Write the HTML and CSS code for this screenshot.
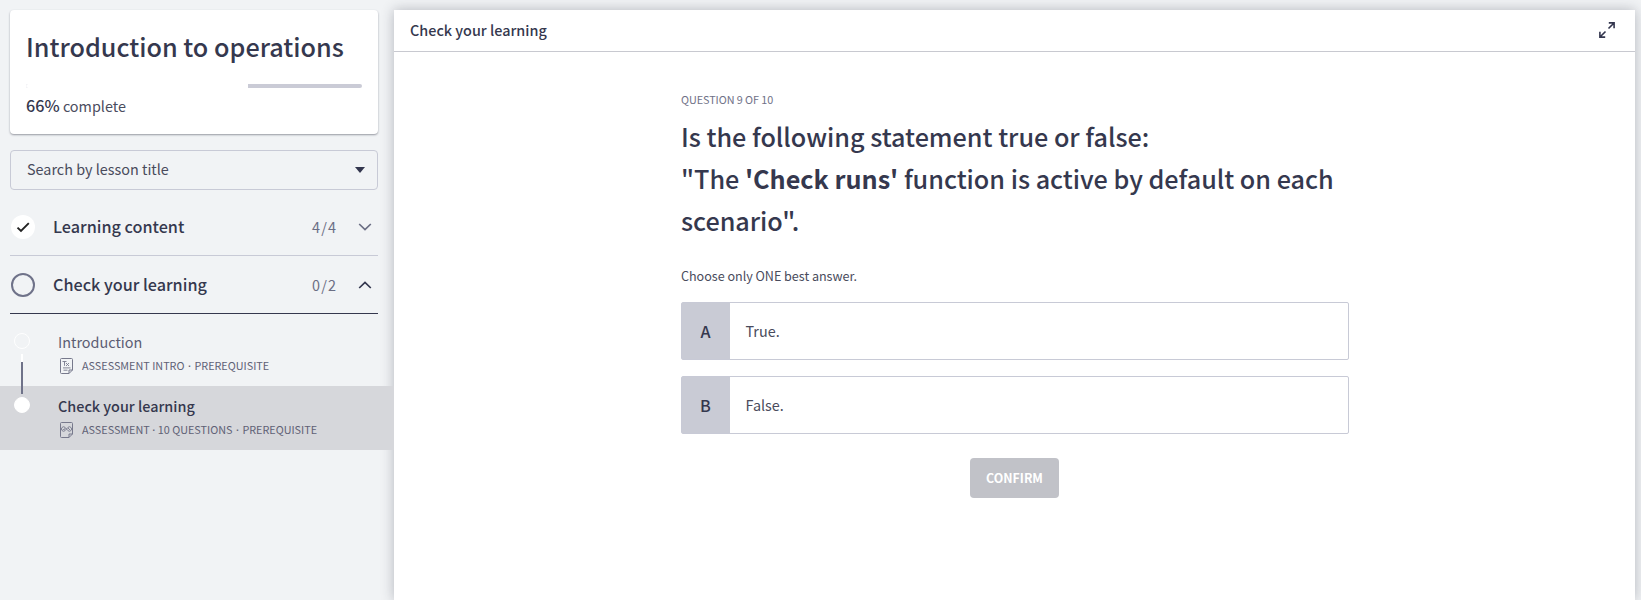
FILE: index.html
```html
<!DOCTYPE html>
<html lang="en">
<head>
<meta charset="utf-8">
<title>Introduction to operations</title>
<link rel="stylesheet" href="styles.css">
</head>
<body>
<div class="app">
  <aside class="sidebar">
    <section class="card">
      <h1 class="card-title">Introduction to operations</h1>
      <div class="progress"><div class="progress-fill" style="width:66%"></div></div>
      <p class="complete"><b>66%</b> complete</p>
    </section>
    <div class="select"><span class="select-text">Search by lesson title</span>
      <svg width="10" height="6" viewBox="0 0 10 6"><path d="M0 0H10L5 6Z" fill="#33364e"/></svg>
    </div>
    <div class="group">
      <svg class="state" width="24" height="24" viewBox="0 0 24 24"><circle cx="12" cy="12" r="12" fill="#fff"/><path d="M6.500 12.600 10 16 17.800 8.200" fill="none" stroke="#222" stroke-width="1.900"/></svg>
      <h2 class="group-title">Learning content</h2>
      <span class="count">4/4</span>
      <svg width="14" height="8" viewBox="0 0 14 8"><path d="M1.200 1 7 6.600 12.800 1" fill="none" stroke="#6b6e84" stroke-width="1.700"/></svg>
    </div>
    <div class="group open">
      <svg class="state" width="24" height="24" viewBox="0 0 24 24"><circle cx="12" cy="12" r="11" fill="none" stroke="#6f7289" stroke-width="2"/></svg>
      <h2 class="group-title">Check your learning</h2>
      <span class="count">0/2</span>
      <svg width="14" height="8" viewBox="0 0 14 8"><path d="M1.200 7 7 1.400 12.800 7" fill="none" stroke="#33364e" stroke-width="1.700"/></svg>
    </div>
    <ul class="lessons">
      <li class="lesson">
        <span class="dot"></span>
        <div class="lesson-body">
          <div class="lesson-title">Introduction</div>
          <div class="meta">
            <svg width="13" height="16" viewBox="0 0 13 16" fill="none" stroke="#77798c"><path d="M1.500.5h10a1 1 0 0 1 1 1V12L9 15.500H1.500a1 1 0 0 1-1-1v-13a1 1 0 0 1 1-1ZM12.500 12H9v3.500"/><path d="M2.500 3.500h4M4.500 3.500v4.300M6 5l3 3M9 5 6 8M3 9.900h7.500M3.500 12.200h4" stroke-width=".9"/></svg>
            <span>ASSESSMENT INTRO</span><span class="sep">·</span><span>PREREQUISITE</span>
          </div>
        </div>
      </li>
      <li class="lesson active">
        <span class="rail"></span>
        <span class="dot"></span>
        <div class="lesson-body">
          <div class="lesson-title">Check your learning</div>
          <div class="meta">
            <svg width="13" height="16" viewBox="0 0 13 16" fill="none" stroke="#77798c"><path d="M1.500.5h10a1 1 0 0 1 1 1V12L9 15.500H1.500a1 1 0 0 1-1-1v-13a1 1 0 0 1 1-1ZM12.500 12H9v3.500"/><path d="M6.500 7 5 5.300a2.200 2.200 0 1 0 0 3.400L8 5.300a2.200 2.200 0 1 1 0 3.400ZM2.800 7l1 1 1.500-2M8 6l2 2" stroke-width=".9"/></svg>
            <span>ASSESSMENT</span><span class="sep tight">·</span><span>10 QUESTIONS</span><span class="sep">·</span><span>PREREQUISITE</span>
          </div>
        </div>
      </li>
    </ul>
  </aside>
  <main class="panel">
    <header class="panel-head">
      <h2 class="panel-title">Check your learning</h2>
      <svg class="expand" width="16" height="16" viewBox="0 0 16 16" fill="none" stroke="#33364e" stroke-width="1.600"><path d="M9.500 6.500 15 1M9.800.9H15.100V6.200M6.500 9.500 1 15M.9 9.800V15.100H6.200"/></svg>
    </header>
    <div class="quiz">
      <p class="step">QUESTION 9 OF 10</p>
      <h1 class="question">Is the following statement true or false:<br>"The <b>'Check runs'</b> function is active by default on each<br>scenario".</h1>
      <p class="hint">Choose only ONE best answer.</p>
      <div class="option"><span class="letter">A</span><span class="answer">True.</span></div>
      <div class="option"><span class="letter">B</span><span class="answer">False.</span></div>
      <button class="confirm">CONFIRM</button>
    </div>
  </main>
</div>
</body>
</html>
```
FILE: styles.css
```css
* { box-sizing: border-box; }
body {
  margin: 0;
  background: #f1f3f5;
  color: #35384e;
  font-family: "Noto Sans CJK SC", "Open Sans", sans-serif;
  overflow: hidden;
}
h1, h2, p, ul { margin: 0; padding: 0; }
h1, h2 { font-weight: 500; }
svg { display: block; flex: none; }
.app { display: flex; height: 600px; padding-top: 10px; }
.sidebar { width: 394px; flex: none; }
.card {
  margin: 0 16px 16px 10px;
  height: 124px;
  padding: 18px 16px 0;
  border-radius: 4px;
  background: #fff;
  box-shadow: 0 1px 2px rgba(40, 42, 60, .45);
}
.card-title { font-size: 25.2px; line-height: 36px; white-space: nowrap; }
.progress { height: 4px; margin-top: 20px; border-radius: 2px; background: #cacbd6; overflow: hidden; }
.progress-fill { height: 4px; background: #fff; }
.complete { margin-top: 5px; font-size: 14.4px; line-height: 24px; color: #4a4c5e; }
.complete b { font-weight: 500; font-size: 16.2px; color: #35384e; }
.select {
  display: flex;
  align-items: center;
  justify-content: space-between;
  margin: 0 16px 9px 10px;
  height: 40px;
  padding: 0 12px 0 16px;
  border: 1px solid #c8cad6;
  border-radius: 4px;
}
.select-text { font-size: 14.4px; line-height: 20px; padding-bottom: 2px; color: #494b5c; }
.group {
  display: flex;
  align-items: center;
  height: 57px;
  margin: 0 16px 0 10px;
  padding: 0 6px 0 1px;
  border-bottom: 1px solid #c8cad6;
}
.group.open { height: 58px; border-color: #35384e; }
.group-title { flex: 1; margin-left: 18px; font-size: 16.2px; line-height: 24px; padding-bottom: 2px; }
.open .group-title { padding-bottom: 1px; }
.count { margin-right: 21px; font-size: 14.4px; line-height: 20px; letter-spacing: 1.1px; color: #6b6e84; }
.lessons { list-style: none; margin-top: 8px; }
.lesson { position: relative; display: flex; height: 64px; padding: 11px 0 0 14px; }
.lesson.active { background: #d6d7db; }
.dot { width: 16px; height: 16px; flex: none; border: 1px solid #fff; border-radius: 50%; }
.active .dot { background: #fff; }
.rail {
  position: absolute;
  left: 21px;
  top: -32px;
  width: 2px;
  height: 40px;
  background: linear-gradient(#fff 8px, #6f7289 8px);
}
.lesson-body { margin: -1px 0 0 28px; }
.lesson-title { font-size: 14.4px; line-height: 20px; color: #5b5d73; }
.active .lesson-title { font-weight: 500; color: #35384e; }
.meta { display: flex; align-items: center; height: 16px; margin: 5px 0 0 1px; font-size: 10.8px; line-height: 16px; color: #5f6175; white-space: nowrap; }
.meta svg { margin: 2px 9px 0 1px; }
.sep { width: 10px; padding-top: 1px; text-align: center; font-family: "Open Sans", sans-serif; font-weight: 600; }
.sep.tight { width: 8px; }
.panel {
  width: 1241px;
  flex: none;
  background: #fff;
  box-shadow: 0 0 12px rgba(40, 42, 60, .3);
}
.panel-head {
  display: flex;
  align-items: center;
  justify-content: space-between;
  height: 42px;
  padding: 0 20px 0 16px;
  border-bottom: 1px solid #c8c9d0;
}
.panel-title { font-size: 14.4px; line-height: 20px; padding-bottom: 2px; }
.expand { margin-bottom: 2px; }
.quiz { display: flex; flex-direction: column; width: 668px; margin-left: 287px; padding-top: 39px; }
.step { font-size: 10.8px; line-height: 16px; color: #6f7187; letter-spacing: -.05px; }
.question { margin-top: 8px; font-size: 25.2px; line-height: 42px; letter-spacing: -.015px; white-space: nowrap; }
.hint { margin: 25px 0 16px; font-size: 12.6px; line-height: 20px; color: #494b5c; letter-spacing: -.03px; }
.option {
  display: flex;
  height: 58px;
  margin-bottom: 16px;
  border: 1px solid #c8cad6;
  border-radius: 2px;
  line-height: 56px;
}
.letter { width: 48px; padding-right: 1px; background: #c9cbd5; text-align: center; font-size: 16.2px; font-weight: 500; }
.answer { margin-left: 15.5px; font-size: 14.4px; color: #494b5c; }
.confirm {
  align-self: center;
  width: 89px;
  height: 40px;
  margin: 8px 1px 0 0;
  padding: 0;
  border: 0;
  border-radius: 4px;
  background: #c1c2c8;
  color: #fff;
  font: 700 12.4px/40px "Noto Sans CJK SC", "Open Sans", sans-serif;
}
```
